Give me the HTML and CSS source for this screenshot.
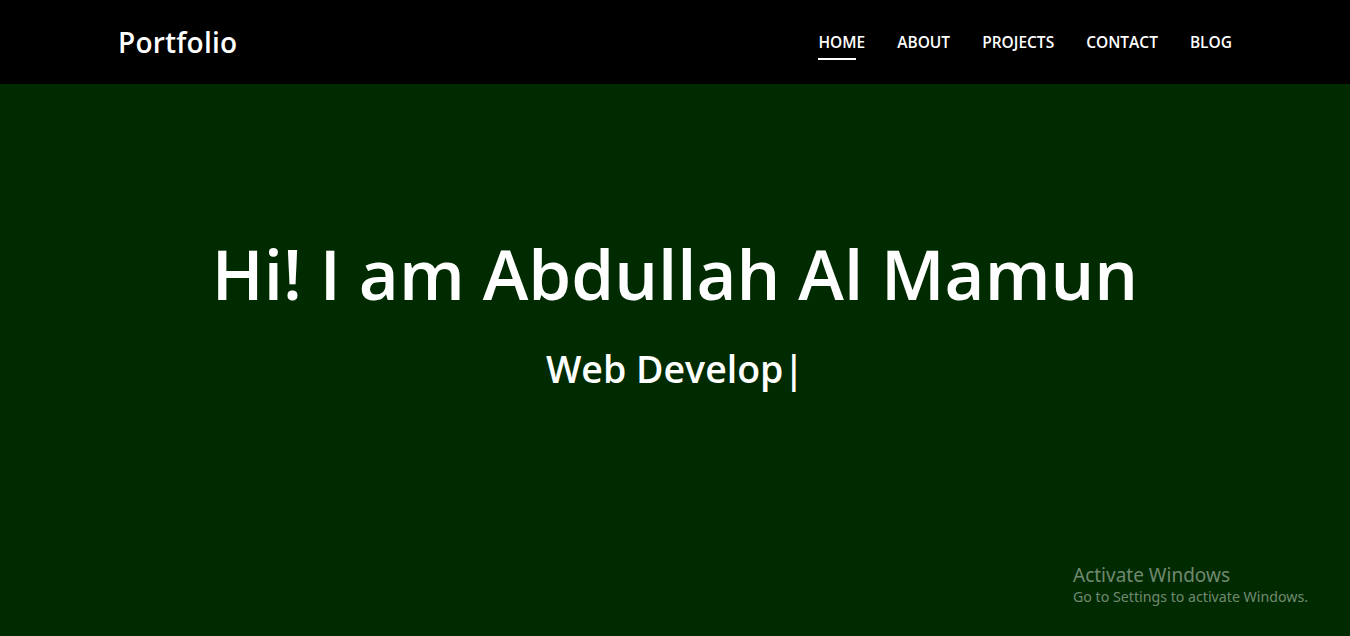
FILE: index.html
```html
<!DOCTYPE html>
<html lang="en">
<head>
<meta charset="utf-8">
<title>Portfolio</title>
<link rel="stylesheet" href="styles.css">
</head>
<body>
<header class="navbar">
  <div class="container nav-inner">
    <a class="brand" href="#">Portfolio</a>
    <nav class="nav-links">
      <a class="nav-link active" href="#">HOME</a>
      <a class="nav-link" href="#">ABOUT</a>
      <a class="nav-link" href="#">PROJECTS</a>
      <a class="nav-link" href="#">CONTACT</a>
      <a class="nav-link" href="#">BLOG</a>
    </nav>
  </div>
</header>
<main class="hero">
  <h1 class="hero-title">Hi! I am Abdullah Al Mamun</h1>
  <h2 class="hero-sub">Web Develop<span class="cursor">|</span></h2>
</main>
<div class="activate">
  <div class="activate-title">Activate Windows</div>
  <div class="activate-text">Go to Settings to activate Windows.</div>
</div>
</body>
</html>
```

FILE: styles.css
```css
* { box-sizing: border-box; }
html, body { margin: 0; padding: 0; }
body {
  font-family: "Open Sans", "Noto Sans", sans-serif;
  background: #002b00;
  color: #fff;
  height: 636px;
  overflow: hidden;
}
.navbar {
  background: #000;
  height: 84px;
}
.container {
  max-width: 1140px;
  margin: 0 auto;
  padding: 0 12px;
}
.nav-inner {
  height: 84px;
  display: flex;
  align-items: center;
  justify-content: space-between;
}
.brand {
  color: #fff;
  text-decoration: none;
  font-size: 28px;
  font-weight: 600;
  letter-spacing: 0.2px;
  margin-left: 1px;
}
.nav-links {
  display: flex;
  gap: 32px;
  margin-right: 1px;
}
.nav-link {
  position: relative;
  color: #fff;
  text-decoration: none;
  font-size: 15.5px;
  font-weight: 600;
}
.nav-link.active::after {
  content: "";
  position: absolute;
  left: 0;
  bottom: -7px;
  width: 38px;
  height: 2px;
  background: #fff;
}
.hero {
  display: flex;
  flex-direction: column;
  align-items: center;
  padding-top: 148px;
}
.hero-title {
  margin: 0;
  font-size: 69px;
  font-weight: 600;
  line-height: 1.2;
}
.hero-sub {
  margin: 31px 0 0;
  font-size: 37.5px;
  font-weight: 600;
  line-height: 1.2;
}
.activate {
  position: absolute;
  left: 1073px;
  top: 563px;
  color: rgba(255,255,255,0.45);
  font-family: "Noto Sans", sans-serif;
}
.activate-title { font-size: 19px; line-height: 24px; }
.activate-text { font-size: 14.2px; line-height: 20px; }
```
